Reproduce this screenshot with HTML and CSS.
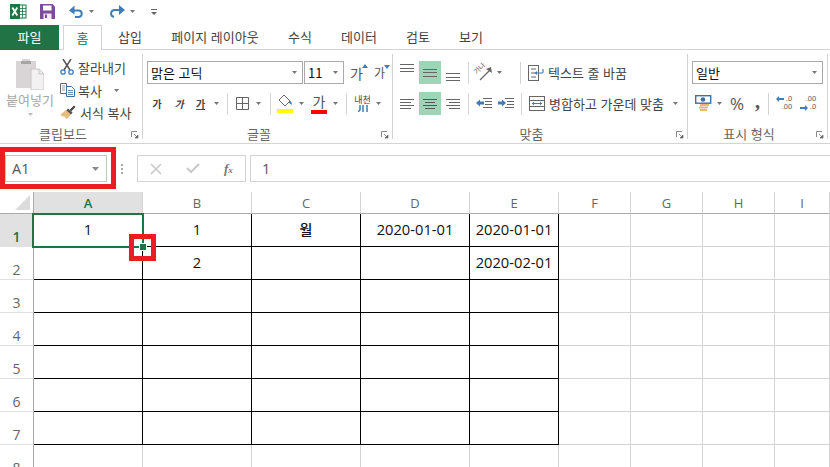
FILE: index.html
```html
<!DOCTYPE html>
<html lang="ko">
<head>
<meta charset="utf-8">
<title>Excel</title>
<link rel="stylesheet" href="styles.css">
</head>
<body>
<svg class="defs" width="0" height="0">
  <symbol id="caret" viewBox="0 0 7 4"><path d="M0 0h7L3.500 4z"/></symbol>
  <symbol id="launch" viewBox="0 0 8 8"><path d="M.5 6V.5H6" fill="none" stroke="#888"/><path d="M3 3l3 3M7 4v3H4z" fill="#666" stroke="#666" stroke-width=".7"/></symbol>
</svg>
<div class="app">
  <header class="qat">
    <svg class="q-xl" width="17" height="15" viewBox="0 0 17 15"><rect x="6" y="1" width="10" height="13" fill="#fff" stroke="#217346"/><path d="M9 1v13M12.500 1v13M6 4.500h10M6 7.500h10M6 10.500h10" stroke="#217346" stroke-width=".8"/><rect y="0" width="10" height="15" fill="#217346"/><path d="M2.300 3.500l5 8M7.300 3.500l-5 8" stroke="#fff" stroke-width="1.800"/></svg>
    <svg class="q-save" width="15" height="15" viewBox="0 0 15 15"><path d="M0 0h12.500L15 2.500V15H0z" fill="#7e4a9e"/><rect x="3" y="1.500" width="8.500" height="5" fill="#fff"/><rect x="3.500" y="9.500" width="8" height="5.500" fill="#f2eaf6"/><rect x="5" y="10.500" width="2" height="3.500" fill="#7e4a9e"/></svg>
    <svg class="q-undo" width="15" height="13" viewBox="0 0 15 13"><path d="M3 5.500h7a3.300 3.300 0 0 1 0 6.500H6" fill="none" stroke="#3f7db8" stroke-width="2"/><path d="M5.500 0v9L0 5z" fill="#3f7db8" transform="translate(0 .5)"/></svg>
    <svg class="q-caret" width="5" height="3"><use href="#caret"/></svg>
    <svg class="q-redo" width="16" height="13" viewBox="0 0 16 13"><path d="M12 5H6a4 4 0 0 0-4 3.500c0 2 1 3 3 3.500" fill="none" stroke="#3f7db8" stroke-width="2"/><path d="M10 0v10l6-5z" fill="#3f7db8"/></svg>
    <svg class="q-caret" width="5" height="3"><use href="#caret"/></svg>
    <svg class="q-more" width="6" height="6" viewBox="0 0 6 6"><path d="M0 0h6v1H0zM0 3h6L3 6z" fill="#666"/></svg>
  </header>

  <nav class="tabs">
    <span class="tab tab-file">파일</span>
    <span class="tab tab-home">홈</span>
    <span class="tab t-ins">삽입</span>
    <span class="tab t-page">페이지 레이아웃</span>
    <span class="tab t-form">수식</span>
    <span class="tab t-data">데이터</span>
    <span class="tab t-rev">검토</span>
    <span class="tab t-view">보기</span>
  </nav>

  <section class="ribbon">
    <div class="group g-clip">
      <div class="clip-body">
        <div class="paste">
          <svg width="28" height="32" viewBox="0 0 28 32"><path d="M0 3h6V1h8v2h6v27H0z" fill="#d9d4d6"/><rect x="5" y="3" width="10" height="3" fill="#a9a5a6"/><path d="M15 11h8l5 5v16H15z" fill="#f4f1f3" stroke="#c9c5c7"/><path d="M23 11v5h5" fill="none" stroke="#c9c5c7"/></svg>
          <span class="paste-text">붙여넣기</span>
          <svg class="paste-caret" width="5" height="3"><use href="#caret"/></svg>
        </div>
        <ul class="clip-list">
          <li><svg width="14" height="16" viewBox="0 0 14 16"><path d="M3 0l7 11M11 0L4 11" stroke="#555" stroke-width="1.500"/><circle cx="3" cy="13" r="2.200" fill="none" stroke="#3f7db8" stroke-width="1.300"/><circle cx="11" cy="13" r="2.200" fill="none" stroke="#3f7db8" stroke-width="1.300"/></svg><span>잘라내기</span></li>
          <li><svg width="15" height="14" viewBox="0 0 15 14"><path d="M.5.500h6v10H.5z" fill="#fff" stroke="#666"/><path d="M2 3h3M2 5h3M2 7h3" stroke="#888" stroke-width=".8"/><path d="M6.500 3.500h5l3 3v7h-8z" fill="#fff" stroke="#3f6f9f"/><path d="M8 7.500h5M8 9.500h5M8 11.500h5" stroke="#3f6f9f" stroke-width=".8"/></svg><span class="copy-t">복사</span><svg class="clip-caret" width="5" height="3"><use href="#caret"/></svg></li>
          <li><svg width="16" height="15" viewBox="0 0 16 15"><path d="M9.500 5L14 .5l1.500 1.500L11 6.500z" fill="#444"/><path d="M8 3.500l4.500 4-1.500 2-4 4.500-2-1 .5-1.500-1.500.5L3 11l-1 .5L.5 9.500z" fill="#e3bc7e"/><path d="M8 3.500l4.500 4-1.500 2-4.500-4z" fill="#555"/></svg><span>서식 복사</span></li>
        </ul>
      </div>
      <div class="g-label">클립보드</div>
      <svg class="launch" width="8" height="8"><use href="#launch"/></svg>
    </div>

    <div class="group g-font">
      <div class="row row-top">
        <div class="select sel-font"><span>맑은 고딕</span><svg width="5" height="3"><use href="#caret"/></svg></div>
        <div class="select sel-size"><span>11</span><svg width="5" height="3"><use href="#caret"/></svg></div>
        <span class="grow">가<svg width="6" height="4" viewBox="0 0 6 4"><path d="M3 0l3 4H0z" fill="#3f7db8"/></svg></span>
        <span class="shrink">가<svg width="6" height="4" viewBox="0 0 6 4"><path d="M0 0h6L3 4z" fill="#3f7db8"/></svg></span>
      </div>
      <div class="row row-btm">
        <b class="f-b">가</b><i class="f-i">가</i><u class="f-u">가</u>
        <svg class="f-c1" width="5" height="3"><use href="#caret"/></svg>
        <span class="sep s-f1"></span>
        <svg class="f-border" width="13" height="13" viewBox="0 0 13 13"><path d="M.5.500h12v12H.5zM6.500.500v12M.5 6.500h12" fill="none" stroke="#666"/></svg>
        <svg class="f-c2" width="5" height="3"><use href="#caret"/></svg>
        <span class="sep s-f2"></span>
        <svg class="f-fill" width="16" height="19" viewBox="0 0 16 19"><path d="M7 1l6 6-5 5-6-6z" fill="#fff" stroke="#666"/><path d="M12 6c2 1 3 3 3 5l-3-2z" fill="#3f7db8"/><rect y="15" width="16" height="4" fill="#ff0"/></svg>
        <svg class="f-c3" width="5" height="3"><use href="#caret"/></svg>
        <span class="f-color">가</span>
        <svg class="f-c4" width="5" height="3"><use href="#caret"/></svg>
        <span class="sep s-f3"></span>
        <span class="f-phon"><span>내천</span><svg width="10" height="7" viewBox="0 0 10 7"><path d="M2 0v5L0 7M5 0v7M9 0v7" fill="none" stroke="#3f7db8" stroke-width="1.500"/></svg></span>
        <svg class="f-c5" width="5" height="3"><use href="#caret"/></svg>
      </div>
      <div class="g-label">글꼴</div>
      <svg class="launch" width="8" height="8"><use href="#launch"/></svg>
    </div>

    <div class="group g-align">
      <div class="row row-top">
        <span class="al a-top"><i></i><i></i><i></i></span>
        <span class="al a-mid on"><i></i><i></i><i></i></span>
        <span class="al a-bot"><i></i><i></i><i></i></span>
        <span class="sep s-a1"></span>
        <span class="a-orient"><span class="orient-t">가나</span><svg width="18" height="16" viewBox="0 0 18 16"><path d="M5 15L15 5" stroke="#666" stroke-width="1.300"/><path d="M16 2l1 6-6-4z" fill="#666"/></svg></span>
        <svg class="a-c1" width="5" height="3"><use href="#caret"/></svg>
        <span class="sep s-a2"></span>
        <svg class="a-wrap" width="16" height="16" viewBox="0 0 16 16"><rect x=".5" y=".5" width="10" height="15" fill="none" stroke="#666"/><path d="M3 4h5M3 8h5M3 12h5" stroke="#666"/><path d="M8 8h6a1.500 1.500 0 0 0 1-2V4" fill="none" stroke="#3f7db8" stroke-width="1.200"/><path d="M9 6v4L6.500 8z" fill="#3f7db8"/></svg>
        <span class="a-text">텍스트 줄 바꿈</span>
      </div>
      <div class="row row-btm">
        <span class="al2 a-l"><i></i><i class="sh"></i><i></i><i class="sh"></i></span>
        <span class="al2 a-c on"><i></i><i class="sh"></i><i></i><i class="sh"></i></span>
        <span class="al2 a-r"><i></i><i class="sh"></i><i></i><i class="sh"></i></span>
        <span class="sep s-a1b"></span>
        <svg class="a-ind1" width="16" height="11" viewBox="0 0 16 11"><path d="M7 .5h9M9 3.500h7M9 6.500h7M7 9.500h9" stroke="#666"/><path d="M0 5L4 1.500v2h4v3H4v2z" fill="#3f7db8"/></svg>
        <svg class="a-ind2" width="16" height="11" viewBox="0 0 16 11"><path d="M7 .5h9M9 3.500h7M9 6.500h7M7 9.500h9" stroke="#666"/><path d="M8 5L4 1.500v2H0v3h4v2z" fill="#3f7db8"/></svg>
        <span class="sep s-a2b"></span>
        <svg class="a-merge" width="16" height="15" viewBox="0 0 16 15"><rect x=".5" y=".5" width="15" height="14" fill="none" stroke="#666"/><path d="M.5 4.500h15M.5 10.500h15" stroke="#666"/><path d="M3 7.500h10" stroke="#3f7db8"/><path d="M5 5.500v4l-2-2zM11 5.500v4l2-2z" fill="#3f7db8"/></svg>
        <span class="a-text">병합하고 가운데 맞춤</span>
        <svg class="a-c2" width="5" height="3"><use href="#caret"/></svg>
      </div>
      <div class="g-label">맞춤</div>
      <svg class="launch" width="8" height="8"><use href="#launch"/></svg>
    </div>

    <div class="group g-num">
      <div class="row row-top">
        <div class="select sel-num"><span>일반</span><svg width="5" height="3"><use href="#caret"/></svg></div>
      </div>
      <div class="row row-btm">
        <svg class="n-cur" width="17" height="17" viewBox="0 0 17 17"><rect x=".7" y=".7" width="15" height="7.500" fill="#fff" stroke="#3f6fa8" stroke-width="1.400"/><circle cx="8" cy="4.500" r="2.300" fill="#3f6fa8"/><path d="M5 10h9M4 12.500h9M5 15h7" stroke="#e8b86d" stroke-width="2"/></svg>
        <svg class="n-c" width="5" height="3"><use href="#caret"/></svg>
        <span class="n-pct">%</span>
        <span class="n-comma">,</span>
        <span class="sep s-n"></span>
        <span class="n-dec"><svg width="8" height="6" viewBox="0 0 8 6"><path d="M0 3l3-3v2h5v2H3v2z" fill="#3f7db8"/></svg><span class="t1">.0</span><span class="t2">.00</span></span>
        <span class="n-dec n-dec2"><span class="t1">.00</span><svg width="8" height="6" viewBox="0 0 8 6"><path d="M8 3L5 0v2H0v2h5v2z" fill="#3f7db8"/></svg><span class="t2">.0</span></span>
      </div>
      <div class="g-label">표시 형식</div>
      <svg class="launch" width="8" height="8"><use href="#launch"/></svg>
    </div>
  </section>

  <section class="fbar">
    <div class="namebox"><span>A1</span><svg width="7" height="4"><use href="#caret"/></svg></div>
    <div class="dots"><i></i><i></i><i></i></div>
    <div class="fbtns">
      <svg width="12" height="12" viewBox="0 0 12 12"><path d="M1 1l10 10M11 1L1 11" stroke="#c8c8c8" stroke-width="1.600"/></svg>
      <svg width="14" height="11" viewBox="0 0 14 11"><path d="M1 5l4 4 8-8" fill="none" stroke="#c8c8c8" stroke-width="2"/></svg>
      <span class="fx">f<sub>x</sub></span>
    </div>
    <div class="finput">1</div>
    <span class="mark mark-name"></span>
  </section>

  <section class="sheet">
    <div class="hd corner"><svg width="15" height="15" viewBox="0 0 15 15"><path d="M15 0v15H0z" fill="#dcdcdc"/></svg></div>
    <div class="hd col sel">A</div><div class="hd col">B</div><div class="hd col">C</div><div class="hd col">D</div><div class="hd col">E</div><div class="hd col">F</div><div class="hd col">G</div><div class="hd col">H</div><div class="hd col">I</div>

    <div class="hd rowh sel">1</div><div class="c k"></div><div class="c k">1</div><div class="c k wol">월</div><div class="c k">2020-01-01</div><div class="c k">2020-01-01</div><div class="c"></div><div class="c"></div><div class="c"></div><div class="c"></div>
    <div class="hd rowh">2</div><div class="c k"></div><div class="c k">2</div><div class="c k"></div><div class="c k"></div><div class="c k">2020-02-01</div><div class="c"></div><div class="c"></div><div class="c"></div><div class="c"></div>
    <div class="hd rowh">3</div><div class="c k"></div><div class="c k"></div><div class="c k"></div><div class="c k"></div><div class="c k"></div><div class="c"></div><div class="c"></div><div class="c"></div><div class="c"></div>
    <div class="hd rowh">4</div><div class="c k"></div><div class="c k"></div><div class="c k"></div><div class="c k"></div><div class="c k"></div><div class="c"></div><div class="c"></div><div class="c"></div><div class="c"></div>
    <div class="hd rowh">5</div><div class="c k"></div><div class="c k"></div><div class="c k"></div><div class="c k"></div><div class="c k"></div><div class="c"></div><div class="c"></div><div class="c"></div><div class="c"></div>
    <div class="hd rowh">6</div><div class="c k"></div><div class="c k"></div><div class="c k"></div><div class="c k"></div><div class="c k"></div><div class="c"></div><div class="c"></div><div class="c"></div><div class="c"></div>
    <div class="hd rowh">7</div><div class="c k"></div><div class="c k"></div><div class="c k"></div><div class="c k"></div><div class="c k"></div><div class="c"></div><div class="c"></div><div class="c"></div><div class="c"></div>
    <div class="hd rowh">8</div><div class="c"></div><div class="c"></div><div class="c"></div><div class="c"></div><div class="c"></div><div class="c"></div><div class="c"></div><div class="c"></div><div class="c"></div>

    <div class="a1">1<span class="handle"></span></div>
    <span class="mark mark-handle"></span>
  </section>
</div>
</body>
</html>
```
FILE: styles.css
```css
* { box-sizing: border-box; }
html, body { margin: 0; padding: 0; }
body { width: 830px; height: 467px; overflow: hidden; background: #fff; font-family: "Open Sans", "Noto Sans CJK KR", sans-serif; color: #444; }
.defs { position: absolute; }
use { fill: #777; }
.app { display: flex; flex-direction: column; height: 467px; }

/* quick access */
.qat { height: 25px; display: flex; align-items: flex-start; padding-top: 4px; }
.qat svg { flex: none; }
.q-xl { margin-left: 10px; }
.q-save { margin-left: 13px; }
.q-undo { margin-left: 14px; margin-top: 1px; }
.qat .q-caret { margin-left: 5px; margin-top: 6px; }
.q-redo { margin-left: 15px; margin-top: 1px; }
.q-more { margin-left: 16px; margin-top: 5px; }

/* tabs */
.tabs { height: 25px; display: flex; align-items: stretch; border-bottom: 1px solid #d4d4d4; font-family: "Noto Sans CJK KR", sans-serif; font-size: 13px; color: #444; }
.tab { display: flex; align-items: center; justify-content: center; padding-bottom: 2px; white-space: nowrap; }
.tab-file { width: 59px; height: 25px; background: #217346; color: #fff; }
.tab-home { width: 39px; height: 25px; margin-left: 4px; background: #fff; border: 1px solid #d4d4d4; border-bottom: 0; color: #217346; position: relative; z-index: 1; }
.t-ins { margin-left: 16px; width: 24px; }
.t-page { margin-left: 29px; width: 88px; }
.t-form { margin-left: 29px; width: 24px; }
.t-data { margin-left: 30px; width: 34px; }
.t-rev { margin-left: 30px; width: 24px; }
.t-view { margin-left: 29px; width: 24px; }

/* ribbon */
.ribbon { height: 94px; display: flex; border-bottom: 1px solid #d4d4d4; font-family: "Noto Sans CJK KR", sans-serif; font-size: 13px; }
.group { position: relative; flex: none; height: 85px; margin-top: 4px; border-right: 1px solid #d4d4d4; }
.g-clip { width: 143px; }
.g-font { width: 250px; }
.g-align { width: 295px; }
.g-num { width: 140px; }
.g-label { position: absolute; left: 0; right: 17px; bottom: -3px; text-align: center; color: #666; line-height: 16px; }
.launch { position: absolute; bottom: 0; right: 3px; }
.row { position: absolute; left: 0; right: 0; display: flex; align-items: center; height: 23px; }
.row > * { flex: none; }
.row-top { top: 7px; }
.row-btm { top: 38px; }
.sep { width: 1px; height: 22px; background: #d4d4d4; }

/* clipboard */
.clip-body { display: flex; height: 70px; }
.paste { width: 60px; display: flex; flex-direction: column; align-items: center; color: #a6a6a6; padding-top: 4px; }
.paste-text { margin-top: 1px; line-height: 17px; white-space: nowrap; }
.paste-caret { margin-top: 5px; }
.paste-caret use { fill: #bbb; }
.clip-list { list-style: none; margin: 2px 0 0; padding: 0; display: flex; flex-direction: column; }
.clip-list li { height: 23.500px; display: flex; align-items: center; white-space: nowrap; }
.clip-list li > svg:first-child { flex: none; }
.clip-list li span { position: relative; margin-left: 4px; }
.clip-list li .copy-t { margin-left: 3px; }
.clip-caret { margin-left: 12px; }
.g-clip .g-label { right: 16px; }

/* select */
.select { height: 23px; background: #fff; border: 1px solid #ababab; display: flex; align-items: center; justify-content: space-between; padding: 0 5px 0 3px; color: #111; white-space: nowrap; }
.sel-font { width: 156px; margin-left: 4px; }
.sel-size { width: 40px; margin-left: 1px; }
.sel-num { width: 131px; margin-left: 4px; }
.grow { margin-left: 6px; font-size: 14px; display: flex; align-items: flex-start; color: #555; }
.shrink { margin-left: 6px; font-size: 12px; display: flex; align-items: flex-start; color: #555; }
.grow svg { margin-top: 1px; margin-left: -1px; }
.shrink svg { margin-top: 1px; margin-left: -1px; }

.f-b { margin-left: 8px; width: 12px; font-size: 10px; text-align: center; font-weight: 700; }
.f-i { margin-left: 10px; width: 12px; font-size: 10px; text-align: center; font-weight: 700; }
.f-u { margin-left: 10px; width: 11px; font-size: 10px; text-align: center; font-weight: 700; }
.f-c1 { margin-left: 8px; }
.s-f1 { margin-left: 8px; }
.f-border { margin-left: 8px; }
.f-c2 { margin-left: 7px; }
.s-f2 { margin-left: 9px; height: 22px; }
.f-fill { margin-left: 6px; margin-top: 0; }
.f-c3 { margin-left: 6px; }
.f-color { margin-left: 7px; width: 16px; text-align: center; font-size: 14px; line-height: 17px; border-bottom: 4px solid #f00; color: #555; }
.f-c4 { margin-left: 6px; }
.s-f3 { margin-left: 8px; }
.f-phon { margin-left: 8px; width: 15px; display: flex; flex-direction: column; align-items: center; font-size: 9px; line-height: 10px; white-space: nowrap; }
.f-c5 { margin-left: 6px; }

/* alignment */
.al, .al2 { width: 22px; height: 23px; display: flex; flex-direction: column; align-items: center; gap: 2.500px; }
.al i, .al2 i { display: block; width: 14px; height: 1px; background: #666; }
.al2 { justify-content: center; gap: 2px; }
.on { background: #9fd5b7; }
.a-top { margin-left: 3px; padding-top: 3px; }
.a-mid { margin-left: 1px; justify-content: center; }
.a-bot { margin-left: 1px; justify-content: flex-end; padding-bottom: 3px; }
.a-l { margin-left: 3px; align-items: flex-start; padding-left: 4px; }
.a-c { margin-left: 1px; }
.a-r { margin-left: 1px; align-items: flex-end; padding-right: 4px; }
.a-l .sh, .a-r .sh { width: 11px; }
.a-c .sh { width: 10px; }
.a-c i { background: #555; }
.s-a1, .s-a1b { margin-left: 4px; }
.a-orient { margin-left: 6px; width: 18px; height: 16px; position: relative; }
.a-orient svg { display: block; }
.orient-t { position: absolute; left: -2px; top: -1px; font-size: 7px; line-height: 9px; white-space: nowrap; transform: rotate(-45deg); color: #666; }
.a-c1 { margin-left: 4px; }
.s-a2 { margin-left: 18px; }
.a-wrap { margin-left: 7px; }
.a-text { margin-left: 4px; padding-bottom: 1px; white-space: nowrap; color: #444; }
.a-ind1 { margin-left: 7px; }
.a-ind2 { margin-left: 6px; }
.s-a2b { margin-left: 7px; }
.a-merge { margin-left: 7px; }
.a-c2 { margin-left: 9px; }

/* number */
.n-cur { margin-left: 7px; }
.n-c { margin-left: 5px; }
.n-pct { margin-left: 8px; font-family: "Open Sans", sans-serif; font-size: 17px; color: #555; }
.n-comma { margin-left: 11px; font-family: "Liberation Serif", serif; font-weight: 700; font-size: 20px; line-height: 20px; color: #555; margin-top: -5px; }
.s-n { margin-left: 8px; }
.n-dec { margin-left: 7px; width: 16px; height: 18px; font-family: "Liberation Sans", sans-serif; font-size: 7.500px; line-height: 8.700px; color: #555; display: grid; grid-template-columns: 8px 8px; grid-template-rows: 8.700px 8.700px; justify-items: end; }
.n-dec svg { align-self: center; }
.n-dec .t2 { grid-column: 1 / 3; }
.n-dec2 { margin-left: 8px; }
.n-dec2 .t1 { grid-column: 1 / 3; }
.n-dec2 .t2 { grid-column: 2; }

/* formula bar */
.fbar { position: relative; height: 48px; padding: 11px 0 10px 5px; display: flex; align-items: stretch; flex: none; }
.namebox { width: 102px; border: 1px solid #c6c6c6; display: flex; align-items: center; justify-content: space-between; padding: 0 7px 0 6px; font-size: 14.500px; color: #555; }
.namebox use { fill: #888; }
.dots { width: 30px; display: flex; flex-direction: column; align-items: center; justify-content: center; gap: 2px; }
.dots i { width: 2px; height: 2px; background: #aaa; }
.fbtns { width: 109px; border: 1px solid #d4d4d4; display: flex; align-items: center; padding-left: 12px; }
.fbtns svg:nth-child(2) { margin-left: 24px; }
.fx { margin-left: 24px; font-family: "Liberation Serif", serif; font-style: italic; font-weight: 700; font-size: 13px; color: #777; }
.fx sub { font-size: 9px; vertical-align: baseline; }
.finput { flex: 1; margin-left: 4px; border: 1px solid #d4d4d4; border-right: 0; padding-left: 11px; line-height: 25px; font-size: 14.500px; color: #555; }
.mark { position: absolute; border: 5px solid #ed1c24; pointer-events: none; z-index: 3; }
.mark-name { left: 0; top: 3px; width: 116px; height: 42px; }

/* sheet */
.sheet { position: relative; flex: 1; display: grid; grid-template-columns: 34px 109px 109px 109px 109px 89px 72px 72px 72px 55px; grid-template-rows: 22px repeat(8, 33px); font-size: 14.700px; color: #111; overflow: hidden; }
.hd { background: #fff; color: #666; display: flex; justify-content: center; font-size: 13px; }
.corner { align-items: flex-end; justify-content: flex-end; padding: 0 3px 3px 0; border-bottom: 1px solid #ababab; border-right: 1px solid #ababab; }
.col { align-items: center; border-bottom: 1px solid #ababab; border-right: 1px solid #d4d4d4; padding-top: 1px; }
.col.sel { background: #e1e1e1; color: #217346; font-weight: 600; border-bottom: 1px solid #217346; }
.rowh { align-items: flex-end; border-right: 1px solid #ababab; border-bottom: 1px solid #e1e1e1; font-size: 14px; line-height: 19px; }
.rowh.sel { background: #e1e1e1; color: #217346; font-weight: 600; }
.c { display: flex; justify-content: center; align-items: flex-start; padding-top: 5px; line-height: 20px; border-right: 1px solid #d4d4d4; border-bottom: 1px solid #d4d4d4; white-space: nowrap; }
.c.k { border-right: 1px solid #000; border-bottom: 1px solid #000; }
.wol { font-family: "Noto Sans CJK KR", sans-serif; font-weight: 500; font-size: 14px; }
.a1 { position: absolute; left: 32px; top: 21px; width: 112px; height: 35px; border: 2px solid #217346; display: flex; justify-content: center; padding-top: 4px; line-height: 20px; background: #fff; z-index: 1; }
.handle { position: absolute; right: -4px; bottom: -4px; width: 6px; height: 6px; background: #217346; box-shadow: 0 0 0 1px #fff; }
.mark-handle { left: 129px; top: 42px; width: 27px; height: 27px; }
```
